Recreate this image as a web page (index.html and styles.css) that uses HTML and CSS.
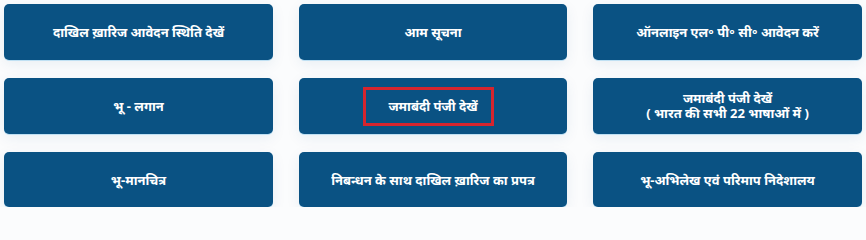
FILE: index.html
```
<!DOCTYPE html>
<html lang="hi">
<head>
<meta charset="utf-8">
<link rel="stylesheet" href="styles.css">
</head>
<body>
<div class="grid">
  <a class="tile">दाखिल ख़ारिज आवेदन स्थिति देखें</a>
  <a class="tile">आम सूचना</a>
  <a class="tile">ऑनलाइन एल॰ पी॰ सी॰ आवेदन करें</a>
  <a class="tile">भू - लगान</a>
  <a class="tile"><span class="hl">जमाबंदी पंजी देखें</span></a>
  <a class="tile two">जमाबंदी पंजी देखें<br>( भारत की सभी 22 भाषाओं में )</a>
  <a class="tile">भू-मानचित्र</a>
  <a class="tile">निबन्धन के साथ दाखिल ख़ारिज का प्रपत्र</a>
  <a class="tile">भू-अभिलेख एवं परिमाप निदेशालय</a>
</div>
</body>
</html>
```
FILE: styles.css
```
html, body {
  margin: 0;
  padding: 0;
  background: #fbfcfd;
}
.grid {
  display: grid;
  grid-template-columns: 269px 268px 269px;
  grid-template-rows: 56px 56px 55px;
  column-gap: 26px;
  row-gap: 18px;
  padding: 4px 0 0 4px;
}
.tile {
  display: flex;
  align-items: center;
  justify-content: center;
  text-align: center;
  background: #0a5283;
  color: #ffffff;
  border-radius: 5px;
  font-family: "Noto Sans", "Noto Sans Devanagari", sans-serif;
  font-weight: 700;
  font-size: 13px;
  line-height: 14px;
  box-shadow: 0 1px 0 #bfe0f3, 0 4px 14px rgba(10, 82, 131, 0.08);
  text-decoration: none;
}
.two {
  line-height: 15px;
}
.hl {
  position: relative;
}
.hl::after {
  content: "";
  position: absolute;
  left: -25px;
  right: -16px;
  top: -12px;
  bottom: -13px;
  border: 3px solid #d7252e;
}
```
